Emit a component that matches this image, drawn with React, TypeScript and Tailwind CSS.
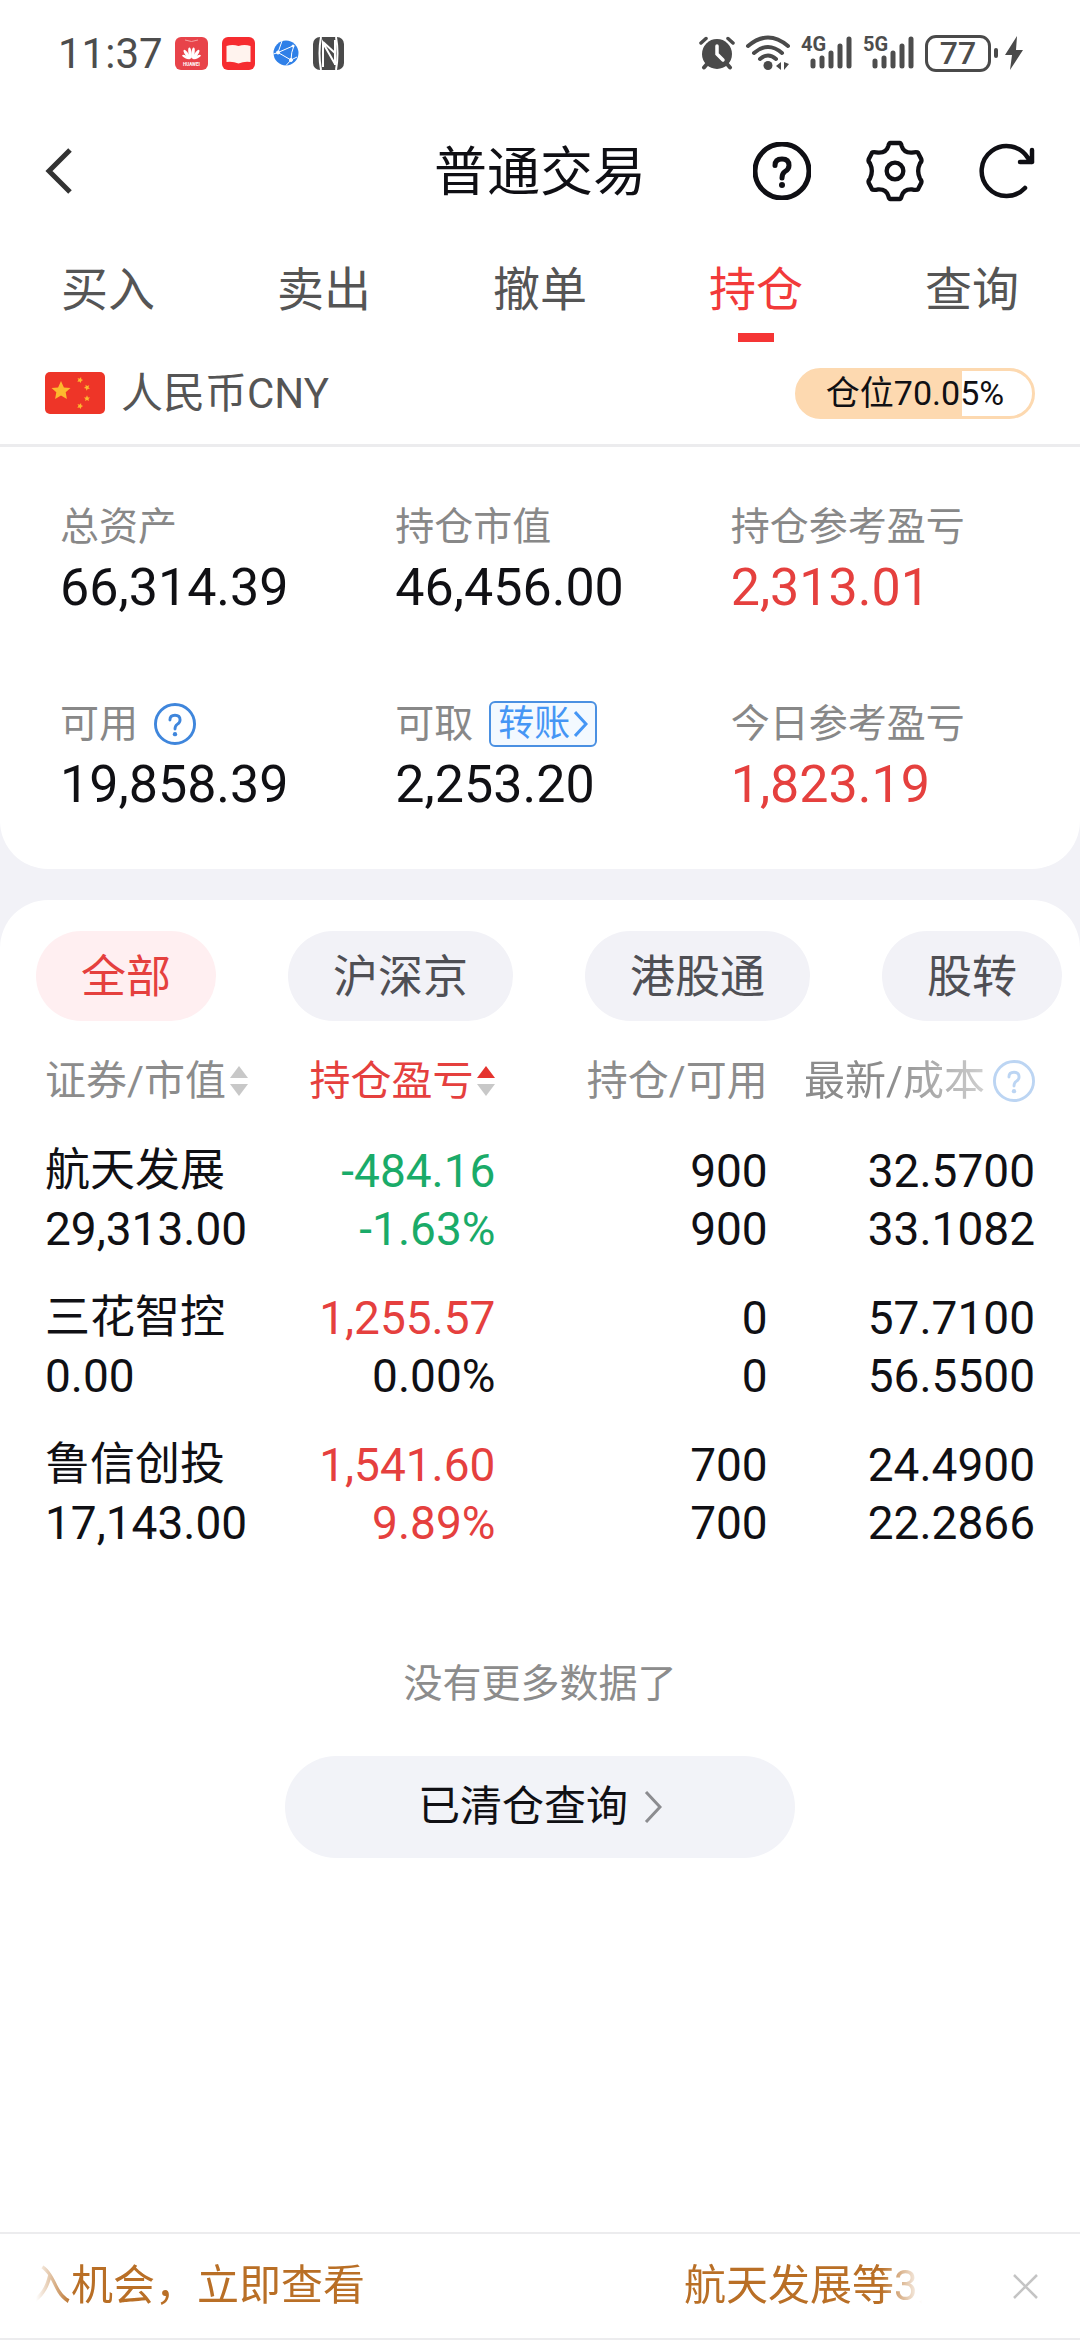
import React from 'react';

type Tone = 'up' | 'down' | 'flat';

const toneClass: Record<Tone, string> = {
  up: 'text-[#e5403e]',
  down: 'text-[#1aab69]',
  flat: 'text-[#101014]',
};

const tabs = ['买入', '卖出', '撤单', '持仓', '查询'];
const markets = ['全部', '沪深京', '港股通', '股转'];

const holdings: {
  name: string;
  value: string;
  profit: string;
  profitTone: Tone;
  rate: string;
  rateTone: Tone;
  amount: string;
  available: string;
  price: string;
  cost: string;
}[] = [
  { name: '航天发展', value: '29,313.00', profit: '-484.16', profitTone: 'down', rate: '-1.63%', rateTone: 'down', amount: '900', available: '900', price: '32.5700', cost: '33.1082' },
  { name: '三花智控', value: '0.00', profit: '1,255.57', profitTone: 'up', rate: '0.00%', rateTone: 'flat', amount: '0', available: '0', price: '57.7100', cost: '56.5500' },
  { name: '鲁信创投', value: '17,143.00', profit: '1,541.60', profitTone: 'up', rate: '9.89%', rateTone: 'up', amount: '700', available: '700', price: '24.4900', cost: '22.2866' },
];

const Signal: React.FC<{ label: string }> = ({ label }) => (
  <div className="relative h-9 w-[52px]">
    <span className="absolute left-0 top-0 text-[20px] leading-[18px] font-bold">{label}</span>
    <svg className="absolute bottom-0 right-0" width="45" height="36" viewBox="0 0 45 36" stroke="currentColor" strokeWidth="5" strokeLinecap="round">
      <path d="M5 26V31M14 23V31M23 18V31M32 11V31M41 4V31" />
    </svg>
  </div>
);

const StatusBar: React.FC = () => (
  <div className="flex h-[106px] items-center pl-[58px] pr-[57px] text-[#4d4d4d]">
    <span className="pt-[2px] text-[42px] leading-[60px]">11:37</span>
    <div className="ml-3 flex items-center gap-[14px]">
      <svg width="33" height="33" viewBox="0 0 33 33">
        <rect width="33" height="33" rx="6" fill="#e8434a" />
        <path d="M10 3q6.500 3 13 0" fill="none" stroke="#f5a0a2" />
        <g fill="#fff">
          <ellipse cx="15" cy="16" rx="1.600" ry="5.500" transform="rotate(-8 15 16)" />
          <ellipse cx="18" cy="16" rx="1.600" ry="5.500" transform="rotate(8 18 16)" />
          <ellipse cx="12" cy="17.500" rx="1.600" ry="5.500" transform="rotate(-35 12 17.500)" />
          <ellipse cx="21" cy="17.500" rx="1.600" ry="5.500" transform="rotate(35 21 17.500)" />
          <ellipse cx="10.800" cy="20" rx="1.300" ry="4" transform="rotate(-63 10.800 20)" />
          <ellipse cx="22.200" cy="20" rx="1.300" ry="4" transform="rotate(63 22.200 20)" />
          <text x="16.500" y="28.500" fontSize="4.500" fontWeight="700" textAnchor="middle">HUAWEI</text>
        </g>
      </svg>
      <svg width="33" height="33" viewBox="0 0 33 33">
        <rect width="33" height="33" rx="6" fill="#f62c30" />
        <path d="M4.500 9q6-2 12 0q6-2 12 0V25q-6-1-12 1.500q-6-2.500-12-1.500z" fill="#fff3ee" />
      </svg>
      <svg className="ml-1" width="26" height="26" viewBox="0 0 26 26">
        <circle cx="13" cy="13" r="12.500" fill="#2f80e8" />
        <g stroke="#fff" fill="none">
          <path d="M5 12.500L21 5.500M5 12.500L18 20M0.500 14l4.500-1.500L9 1M18 20l-5 5.500M21 5.500q-3 7-3 14.500M18 20l6-3" />
          <circle cx="5" cy="12.500" r="1.500" fill="#fff" />
          <circle cx="18" cy="20" r="1.500" fill="#fff" />
          <circle cx="20" cy="6" r="1" fill="#fff" />
        </g>
      </svg>
      <svg width="31" height="33" viewBox="0 0 31 33">
        <rect width="31" height="33" rx="7" fill="#4a4a4a" />
        <path d="M8 0Q5 16 8 33M23 0Q26 16 23 33" fill="none" stroke="#fff" strokeWidth="2" />
        <path d="M10 30V6L22 27M10 5L22 16M22 3V28" fill="none" stroke="#fff" strokeWidth="2" />
      </svg>
    </div>
    <div className="ml-auto flex items-center gap-[10px]">
      <svg width="36" height="34" viewBox="0 0 36 34" stroke="#4a4a4a" strokeLinecap="round">
        <circle cx="18" cy="18" r="15" fill="#4a4a4a" stroke="none" />
        <path d="M2 7L7 2.500M34 7L29 2.500" strokeWidth="3.500" />
        <path d="M8 28L5 31.500M28 28L31 31.500" strokeWidth="4" />
        <path d="M18 10V18L24 24" fill="none" stroke="#fff" strokeWidth="3.500" />
      </svg>
      <svg width="46" height="36" viewBox="0 0 46 36" fill="none" stroke="#4a4a4a" strokeWidth="4" strokeLinecap="round">
        <path d="M3 11Q23-6 43 11M9 18Q23 6 37 18M15 24Q23 17 31 24" />
        <circle cx="23" cy="30.500" r="4.500" fill="#4a4a4a" stroke="none" />
        <path d="M36 27V35L31 31zM39 27V35L44 29z" fill="#4a4a4a" stroke="none" />
      </svg>
      <Signal label="4G" />
      <Signal label="5G" />
      <div className="flex items-center gap-[3px]">
        <span className="flex h-[37px] w-[66px] items-center justify-center rounded-[11px] border-[3px] border-[#4a4a4a] text-[32px] leading-[31px] font-medium">77</span>
        <span className="h-[10px] w-1 rounded-full bg-[#4a4a4a]" />
        <svg className="ml-1" width="18" height="34" viewBox="0 0 18 34" fill="#4a4a4a">
          <path d="M12 0L0 19H7L5 34L18 14H11z" />
        </svg>
      </div>
    </div>
  </div>
);

const HelpIcon: React.FC<{ size: number; stroke: number }> = ({ size, stroke }) => (
  <svg width={size} height={size} viewBox="0 0 58 58" fill="none" stroke="currentColor" strokeWidth={stroke} strokeLinecap="round">
    <circle cx="29" cy="29" r="27" />
    <path d="M22 23.500Q22 17 29 17Q36 17 36 23.500Q36 27 32 29.500Q29 31.500 29 36" />
    <circle cx="29" cy="43" r="3" fill="currentColor" stroke="none" />
  </svg>
);

const Header: React.FC = () => (
  <header className="grid h-[130px] grid-cols-[1fr_auto_1fr] items-center px-[45px] text-[#0f0f14]">
    <button type="button" aria-label="返回" className="justify-self-start">
      <svg width="28" height="46" viewBox="0 0 28 46" fill="none" stroke="#333" strokeWidth="5">
        <path d="M25 2L4 23L25 44" />
      </svg>
    </button>
    <h1 className="pt-1 text-[53px] leading-[60px]">普通交易</h1>
    <div className="flex items-center gap-[54px] justify-self-end">
      <button type="button" aria-label="帮助"><HelpIcon size={58} stroke={5} /></button>
      <button type="button" aria-label="设置">
        <svg width="60" height="64" viewBox="492 57 180 192" fill="none" stroke="currentColor" strokeWidth="13" strokeLinejoin="round">
          <path d="M568 69H596Q600 69 602 78Q608 99 632 98Q648 94 651 98L661 118Q663 124 657 130Q646 153 657 176Q663 182 661 188L651 208Q648 212 632 208Q608 207 602 228Q600 237 596 237H568Q564 237 562 228Q556 207 532 208Q516 212 513 208L503 188Q501 182 507 176Q518 153 507 130Q501 124 503 118L513 98Q516 94 532 98Q556 99 562 78Q564 69 568 69Z" />
          <circle cx="582" cy="153" r="25" />
        </svg>
      </button>
      <button type="button" aria-label="刷新">
        <svg width="56" height="56" viewBox="0 0 56 56" fill="none" stroke="currentColor" strokeWidth="4.500" strokeLinecap="round" strokeLinejoin="round">
          <path d="M46 45A25 25 0 1 1 49 15L53 19M53 7V19H41" />
        </svg>
      </button>
    </div>
  </header>
);

const Tabs: React.FC = () => (
  <nav className="flex pt-[11px]">
    {tabs.map((tab) => (
      <button
        key={tab}
        type="button"
        className={`flex flex-1 flex-col items-center text-[47px] leading-[86px] ${tab === '持仓' ? 'text-[#f23a3a]' : 'text-[#555]'}`}
      >
        {tab}
        <span className={`h-[9px] w-9 ${tab === '持仓' ? 'bg-[#f53535]' : ''}`} />
      </button>
    ))}
  </nav>
);

const star = 'M0-10L2.900-3.500L9.500-3.100L4.700 1.200L5.900 8.100L0 4.600L-5.900 8.100L-4.700 1.200L-9.500-3.100L-2.900-3.500Z';

const Currency: React.FC = () => (
  <div className="flex h-[105px] items-center border-b-[3px] border-[#ececee] px-[45px]">
    <svg width="60" height="42" viewBox="0 0 60 42">
      <rect width="60" height="42" rx="5" fill="#ee3528" />
      <g fill="#fdb92e">
        <path d={star} transform="translate(16 19)" />
        <path d={star} transform="translate(35 8) rotate(20) scale(.32)" />
        <path d={star} transform="translate(42 15.500) rotate(45) scale(.32)" />
        <path d={star} transform="translate(42 26.500) scale(.32)" />
        <path d={star} transform="translate(35 34) rotate(20) scale(.32)" />
      </g>
    </svg>
    <span className="ml-4 pt-[2px] text-[42px] leading-[60px] text-[#555]">人民币CNY</span>
    <div className="ml-auto flex h-[51px] w-60 items-center justify-center rounded-full border-[3px] border-[#fdd9b0] bg-[linear-gradient(to_right,#fdd9b0_70.05%,#fff_70.05%)] text-[34px] leading-[45px] text-[#101014]">
      仓位70.05%
    </div>
  </div>
);

const Stat: React.FC<{ label: string; value: string; tone?: Tone; children?: React.ReactNode }> = ({ label, value, tone = 'flat', children }) => (
  <div>
    <dt className="flex h-[60px] items-center text-[39px] leading-[60px] text-[#888]">
      {label}
      {children}
    </dt>
    <dd className={`text-[52px] leading-[62px] ${toneClass[tone]}`}>{value}</dd>
  </div>
);

const Summary: React.FC = () => (
  <dl className="grid grid-cols-3 gap-y-[75px] pt-[50px] pr-[14px] pb-[53px] pl-[60px]">
    <Stat label="总资产" value="66,314.39" />
    <Stat label="持仓市值" value="46,456.00" />
    <Stat label="持仓参考盈亏" value="2,313.01" tone="up" />
    <Stat label="可用" value="19,858.39">
      <button type="button" aria-label="可用说明" className="ml-4 text-[#3f86dc]">
        <HelpIcon size={42} stroke={4} />
      </button>
    </Stat>
    <Stat label="可取" value="2,253.20">
      <button type="button" className="ml-4 flex h-[46px] items-center gap-1 rounded-md border-2 border-[#4a90e2] bg-[#f3f9ff] px-[7px] text-[36px] leading-[42px] text-[#4596f5]">
        转账
        <svg width="14" height="28" viewBox="0 0 14 28" fill="none" stroke="currentColor" strokeWidth="3">
          <path d="M1 2L12 14L1 26" />
        </svg>
      </button>
    </Stat>
    <Stat label="今日参考盈亏" value="1,823.19" tone="up" />
  </dl>
);

const SortArrows: React.FC<{ active?: boolean }> = ({ active }) => (
  <svg width="18" height="30" viewBox="0 0 18 30">
    <path d="M9 0L18 12H0z" fill={active ? '#e5332e' : '#c8c8c8'} />
    <path d="M9 30L18 18H0z" fill="#c8c8c8" />
  </svg>
);

const Holdings: React.FC = () => (
  <div className="px-[45px] pt-[30px]">
    <table className="w-full table-fixed text-right text-[#101014]">
      <thead className="text-[41px] leading-[60px] whitespace-nowrap text-[#8c8c8c]">
        <tr>
          <th className="w-[22%] p-0 font-normal">
            <button type="button" className="flex items-center gap-1">证券/市值<SortArrows /></button>
          </th>
          <th className="w-[23.5%] p-0 font-normal">
            <button type="button" className="ml-auto flex items-center gap-1 text-[#e5403e]">持仓盈亏<SortArrows active /></button>
          </th>
          <th className="w-[27.5%] p-0 font-normal">持仓/可用</th>
          <th className="w-[27%] p-0 font-normal">
            <div className="flex items-center justify-end gap-2 [mask-image:linear-gradient(to_right,#000_45%,rgba(0,0,0,0.35)_85%)]">
              最新/成本
              <button type="button" aria-label="成本说明" className="text-[#3f86dc]"><HelpIcon size={42} stroke={4} /></button>
            </div>
          </th>
        </tr>
      </thead>
      <tbody className="text-[46px] leading-[58px]">
        {holdings.map((item) => (
          <tr key={item.name}>
            <td className="p-0 pt-[31px] text-left whitespace-nowrap">
              <div className="text-[45px]">{item.name}</div>
              <div>{item.value}</div>
            </td>
            <td className="p-0 pt-[31px]">
              <div className={toneClass[item.profitTone]}>{item.profit}</div>
              <div className={toneClass[item.rateTone]}>{item.rate}</div>
            </td>
            <td className="p-0 pt-[31px]">
              <div>{item.amount}</div>
              <div>{item.available}</div>
            </td>
            <td className="p-0 pt-[31px]">
              <div>{item.price}</div>
              <div>{item.cost}</div>
            </td>
          </tr>
        ))}
      </tbody>
    </table>
  </div>
);

const Notice: React.FC = () => (
  <footer className="mt-auto flex h-[108px] items-center justify-between border-y-2 border-[#ececee] pr-[42px] pl-[29px]">
    <a href="#notice" className="flex w-[893px] gap-[319px] overflow-hidden text-[42px] leading-[60px] whitespace-nowrap text-[#b96f26] [mask-image:linear-gradient(to_right,transparent_7px,#000_42px,#000_852px,transparent_893px)]">
      <span>入机会，立即查看</span>
      <span>航天发展等3只</span>
    </a>
    <button type="button" aria-label="关闭">
      <svg width="25" height="25" viewBox="0 0 25 25" stroke="#c4c4c4" strokeWidth="2.500">
        <path d="M1 1L24 24M24 1L1 24" />
      </svg>
    </button>
  </footer>
);

const App: React.FC = () => {
  return (
    <div className="flex min-h-screen flex-col bg-[#f2f2f7] font-[Roboto,'Noto_Sans_CJK_SC',sans-serif]">
      <div className="rounded-b-[48px] bg-white">
        <StatusBar />
        <Header />
        <Tabs />
        <Currency />
        <Summary />
      </div>

      <main className="mt-[31px] flex grow flex-col rounded-t-[48px] bg-white">
        {/* Market filter */}
        <div className="flex gap-[72px] overflow-hidden px-9 pt-[31px]">
          {markets.map((market) => (
            <button
              key={market}
              type="button"
              className={`h-[90px] shrink-0 rounded-full px-[45px] pt-[3px] text-[45px] leading-[60px] ${market === '全部' ? 'bg-[#ffeff1] text-[#e5403e]' : 'bg-[#f2f2f7] text-[#4f4f54]'}`}
            >
              {market}
            </button>
          ))}
        </div>

        <Holdings />

        <div className="flex flex-col items-center pt-[102px]">
          <p className="text-[39px] leading-[60px] text-[#8c8c8c]">没有更多数据了</p>
          <button type="button" className="mt-[42px] flex h-[102px] w-[510px] items-center justify-center gap-4 rounded-full bg-[#f2f3f8] text-[42px] leading-[60px] text-[#101014]">
            已清仓查询
            <svg width="18" height="32" viewBox="0 0 18 32" fill="none" stroke="#8c8c90" strokeWidth="3">
              <path d="M2 1L16 16L2 31" />
            </svg>
          </button>
        </div>

        <Notice />
      </main>
    </div>
  );
};

export default App;
